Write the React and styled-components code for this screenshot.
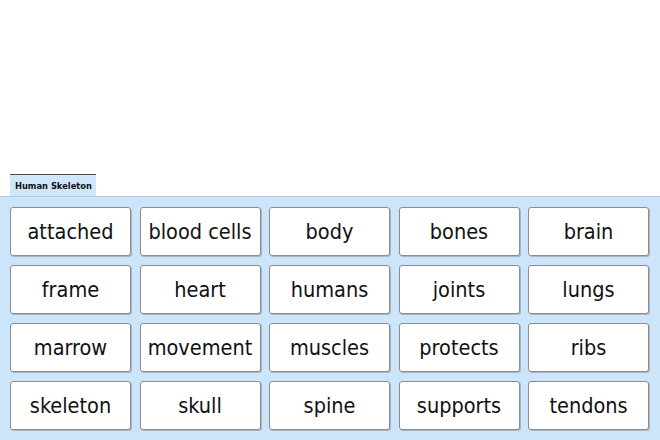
import React from 'react'
import styled, { createGlobalStyle } from 'styled-components'

const Global = createGlobalStyle`
    html, body {
        margin: 0;
        padding: 0;
        background: #ffffff;
    }
`

const Page = styled.div`
    height: 440px;
    width: 660px;
    display: flex;
    flex-direction: column;
    overflow: hidden;
`

const Blank = styled.div`
    flex: 1;
`

const TabStrip = styled.div`
    display: flex;
    padding-left: 10px;
`

const Tab = styled.div`
    height: 21px;
    padding: 0 4px 0 5px;
    border-top: 1px solid #4a4a4a;
    background: #cfe6fb;
    font-family: "DejaVu Sans", sans-serif;
    font-weight: bold;
    font-size: 8.3px;
    line-height: 22px;
    color: #111;
`

const Panel = styled.div`
    height: 233px;
    border-top: 1px solid #b3c8dc;
    background: #cce5fb;
    padding: 10px 0 0 10px;
    display: grid;
    grid-template-columns: repeat(5, 121px);
    grid-auto-rows: 49px;
    column-gap: 8.5px;
    row-gap: 9px;
`

const Card = styled.div`
    background: #ffffff;
    border: 1px solid #8c8c8c;
    border-radius: 3px;
    box-shadow: 1px 1px 0 #a9b6c2;
    display: flex;
    align-items: center;
    justify-content: center;
    font-family: "DejaVu Sans Condensed", "DejaVu Sans", sans-serif;
    font-stretch: condensed;
    font-size: 21.5px;
    color: #111;
    box-sizing: border-box;
`

const words = [
    'attached', 'blood cells', 'body', 'bones', 'brain',
    'frame', 'heart', 'humans', 'joints', 'lungs',
    'marrow', 'movement', 'muscles', 'protects', 'ribs',
    'skeleton', 'skull', 'spine', 'supports', 'tendons',
]

export default function App() {
    return (
        <Page>
            <Global />
            <Blank />
            <TabStrip>
                <Tab>Human Skeleton</Tab>
            </TabStrip>
            <Panel>
                { words.map(w => <Card key={ w }>{ w }</Card>) }
            </Panel>
        </Page>
    )
}
